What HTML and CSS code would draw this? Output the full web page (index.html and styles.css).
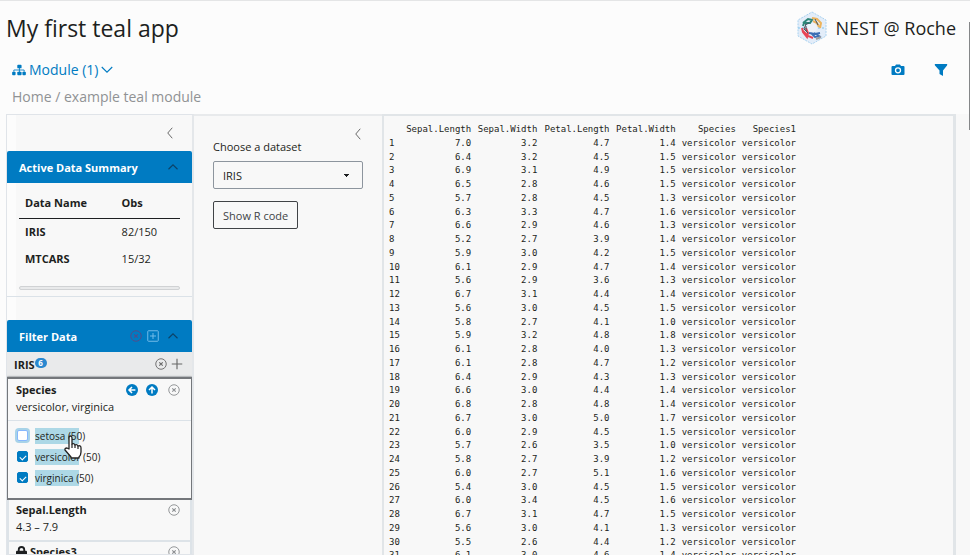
FILE: index.html
```html
<!DOCTYPE html>
<html lang="en">
<head>
<meta charset="utf-8">
<title>My first teal app</title>
<link rel="stylesheet" href="styles.css">
</head>
<body>
<svg class="defs" aria-hidden="true">
  <symbol id="left" viewBox="0 0 16 16"><path d="M11 1 5 8l6 7" fill="none" stroke="currentColor" stroke-width="1.3"/></symbol>
  <symbol id="up" viewBox="0 0 16 16"><path d="m2 11 6-6 6 6" fill="none" stroke="currentColor" stroke-width="1.5"/></symbol>
  <symbol id="down" viewBox="0 0 16 16"><path d="m1 4 7 7 7-7" fill="none" stroke="currentColor" stroke-width="1.5"/></symbol>
  <symbol id="remove" viewBox="0 0 16 16"><g fill="none" stroke="currentColor"><circle cx="8" cy="8" r="7" stroke-width="1.2"/><path d="m5.7 5.7 4.6 4.6m0-4.6-4.6 4.6" stroke-width="1.4"/></g></symbol>
  <symbol id="plus" viewBox="0 0 16 16"><path d="M8 1v14M1 8h14" stroke="currentColor" stroke-width="1.5"/></symbol>
  <symbol id="boxplus" viewBox="0 0 16 16"><g fill="none" stroke="currentColor" stroke-width="1.2"><rect x="1" y="1" width="14" height="14" rx="1"/><path d="M8 4v8M4 8h8"/></g></symbol>
  <symbol id="arrow" viewBox="0 0 16 16"><circle cx="8" cy="8" r="8" fill="#007bc2"/><path d="M12.5 8h-8M8 4 4 8l4 4" fill="none" stroke="#fff" stroke-width="2"/></symbol>
</svg>

<header class="top">
  <h1>My first teal app</h1>
  <div class="brand">
    <svg class="logo" viewBox="0 0 30 34" aria-hidden="true">
      <path d="M15 1 29 9v16l-14 8L1 25V9z" fill="#e3edf9" stroke="#a9d2f0" stroke-dasharray="2 1"/>
      <path d="M1 17h28" stroke="#7fc3ec" stroke-dasharray="2 2"/>
      <circle cx="15" cy="17" r="5" fill="#eef2f8"/>
      <g fill="none" stroke-width="2">
        <path d="m6 12 5-4 4 1-2 3H7l-1 3" stroke="#2e8577"/>
        <path d="m15 7 5 1 4 4-1 5m-7-7 4 2 2 4" stroke="#edb45c"/>
        <path d="m5 17 1 4 4 5 1-4-2-5m-3 3 5 5 5 2" stroke="#e84556"/>
        <path d="m12 22 6 1 5-1m-9 0 4 4 4-1-5-3" stroke="#3c6eb4"/>
        <path d="m8 14 4-2m-3 1-2 5 4 4m-2-7v5m9-12 3 6" stroke="#46545f" stroke-width="1"/>
        <path d="m19 28 5-2" stroke="#9a9da1" stroke-width="2"/>
      </g>
    </svg>
    <span>NEST @ Roche</span>
  </div>
</header>

<nav class="nav">
  <button class="module">
    <svg class="tree" viewBox="0 0 16 14" aria-hidden="true"><g fill="currentColor"><rect x="6" y="1" width="5" height="4" rx="1"/><rect x="0" y="9" width="4" height="4" rx="1"/><rect x="6" y="9" width="5" height="4" rx="1"/><rect x="12" y="9" width="4" height="4" rx="1"/></g><path d="M2 9V7h12v2M8.500 4v6" fill="none" stroke="currentColor"/></svg>
    Module (1)
    <svg class="i12" aria-hidden="true"><use href="#down"/></svg>
  </button>
  <div class="tools">
    <button aria-label="Take a snapshot"><svg class="i14" viewBox="0 0 14 14" aria-hidden="true"><path d="M4 3 5 1.500h4L10 3h2.500q1 0 1 1v7q0 1-1 1h-11q-1 0-1-1V4q0-1 1-1z" fill="currentColor"/><circle cx="7" cy="7.300" r="2.500" fill="none" stroke="#fff" stroke-width="1.300"/></svg></button>
    <button aria-label="Toggle filters"><svg class="i14" viewBox="0 0 14 14" aria-hidden="true"><path d="M1 1h12q.6.500 0 1.500L9 7.500V13L5.500 11V7.500L1 2.500Q.4 1.500 1 1z" fill="currentColor"/></svg></button>
  </div>
</nav>
<div class="crumb">Home / example teal module</div>

<main class="app">
  <aside class="side">
    <button class="fold" aria-label="Collapse filter panel"><svg class="i12" aria-hidden="true"><use href="#left"/></svg></button>

    <section class="summary">
      <div class="bar"><h2>Active Data Summary</h2><button aria-label="Collapse summary"><svg class="i12" aria-hidden="true"><use href="#up"/></svg></button></div>
      <table class="obs">
        <thead><tr><th>Data Name</th><th>Obs</th></tr></thead>
        <tbody><tr><th>IRIS</th><td>82/150</td></tr><tr><th>MTCARS</th><td>15/32</td></tr></tbody>
      </table>
      <div class="hscroll"></div>
    </section>

    <section class="filters">
      <div class="bar"><h2>Filter Data</h2>
        <div class="acts">
          <button class="clear" aria-label="Remove all filters"><svg class="i12" aria-hidden="true"><use href="#remove"/></svg></button>
          <button class="add" aria-label="Add filter"><svg class="i12" aria-hidden="true"><use href="#boxplus"/></svg></button>
          <button aria-label="Collapse filters"><svg class="i12" aria-hidden="true"><use href="#up"/></svg></button>
        </div>
      </div>
      <div class="dataset">
        <b>IRIS</b><span class="count">6</span>
        <button aria-label="Remove IRIS filters"><svg class="i12" aria-hidden="true"><use href="#remove"/></svg></button>
        <button aria-label="Add IRIS filter"><svg class="i12" aria-hidden="true"><use href="#plus"/></svg></button>
      </div>
      <article class="card active">
        <div class="head">
          <div class="title"><h3>Species</h3>
            <button aria-label="Back"><svg class="i12" aria-hidden="true"><use href="#arrow"/></svg></button>
            <button class="turn" aria-label="Reset"><svg class="i12" aria-hidden="true"><use href="#arrow"/></svg></button>
            <button class="grey" aria-label="Remove Species"><svg class="i12" aria-hidden="true"><use href="#remove"/></svg></button>
          </div>
          <p>versicolor, virginica</p>
        </div>
        <div class="choices">
          <label><input type="checkbox" class="focus"><span>setosa (50)</span></label>
          <label><input type="checkbox" checked><span>versicolor (50)</span></label>
          <label><input type="checkbox" checked><span>virginica (50)</span></label>
          <svg class="hand" viewBox="0 0 18 24" aria-hidden="true"><path d="M5 14V3q0-2 1.500-2T8 3v6q2-1 3 1 2-1 3 1 3-1 3 2v4q0 3-2 5v1H7v-1L1 15q-.5-2 2-2z" fill="#fff" stroke="#222" stroke-width="1.300" stroke-linejoin="round"/><path d="M8 9v4m3-3v3m3-2v3" stroke="#222" stroke-width="1.200"/></svg>
        </div>
      </article>
      <article class="card">
        <div class="head">
          <div class="title"><h3>Sepal.Length</h3><button class="grey" aria-label="Remove Sepal.Length"><svg class="i12" aria-hidden="true"><use href="#remove"/></svg></button></div>
          <p>4.3 – 7.9</p>
        </div>
      </article>
      <article class="card">
        <div class="head">
          <div class="title"><svg class="lock" viewBox="0 0 12 13" aria-hidden="true"><rect x="0" y="5" width="12" height="8" rx="1" fill="#1d1f21"/><path d="M3 6V4q0-3 3-3t3 3v2" fill="none" stroke="#1d1f21" stroke-width="2"/></svg><h3>Species3</h3><button class="grey" aria-label="Remove Species3"><svg class="i12" aria-hidden="true"><use href="#remove"/></svg></button></div>
        </div>
      </article>
    </section>
  </aside>

  <section class="encoding">
    <button class="fold" aria-label="Collapse encoding panel"><svg class="i12" aria-hidden="true"><use href="#left"/></svg></button>
    <label for="ds">Choose a dataset</label>
    <select id="ds"><option>IRIS</option><option>MTCARS</option></select>
    <button class="code">Show R code</button>
  </section>

  <section class="output">
    <table class="data">
      <colgroup><col class="c-n"><col class="c-l"><col class="c-w"><col class="c-p"><col class="c-w"><col class="c-s"><col class="c-s"></colgroup>
      <thead><tr><th></th><th>Sepal.Length</th><th>Sepal.Width</th><th>Petal.Length</th><th>Petal.Width</th><th>Species</th><th>Species1</th></tr></thead>
      <tbody id="rows"></tbody>
    </table>
  </section>
</main>
<div class="vscroll"></div>
<script src="script.js"></script>
</body>
</html>
```
FILE: styles.css
```css
* { box-sizing: border-box; }
body {
  margin: 0;
  height: 100vh;
  overflow: hidden;
  display: flex;
  flex-direction: column;
  border-top: 1px solid #e4e5e6;
  background: #fcfcfc;
  color: #1d1f21;
  font: 11px/17px "Open Sans", "Noto Sans", sans-serif;
}
h1, h2, h3, p { margin: 0; font-size: inherit; }
button { border: 0; padding: 0; background: none; color: inherit; font: inherit; display: flex; align-items: center; }
svg { display: block; flex: none; }
.defs { position: absolute; width: 0; height: 0; }
.i12 { width: 12px; height: 12px; }
.i14 { width: 14px; height: 14px; }

.top { display: flex; justify-content: space-between; align-items: center; height: 54px; padding: 0 14px 0 6px; }
h1 { font-size: 23px; line-height: 32px; font-weight: 400; }
.brand { display: flex; align-items: center; gap: 8px; font-size: 18px; line-height: 26px; }
.logo { width: 30px; height: 34px; }

.nav { display: flex; justify-content: space-between; align-items: center; height: 29px; padding: 0 22px 0 12px; color: #007bc2; }
.module { gap: 3px; font-size: 14px; line-height: 20px; }
.tree { width: 14px; height: 12px; }
.tools { display: flex; gap: 29px; }
.crumb { padding: 3px 12px 7px; font-size: 14px; line-height: 20px; color: #909294; }

.app { flex: 1; min-height: 0; display: grid; grid-template-columns: 188px 188px 1fr; padding: 0 14px 0 6px; background: linear-gradient(90deg, #fcfcfc 16px, #f8f8f8 16px); overflow: hidden; }
.side { border: 1px solid #e0e4e9; border-right: 2px solid #e4e7ea; overflow: hidden; }
.side > .fold { margin: 12px 16px 12px auto; }
.fold { color: #666; }

.bar { display: flex; align-items: center; justify-content: space-between; height: 32px; padding: 0 13px 0 12px; background: #007bc2; color: #fff; border-radius: 2px 2px 0 0; }
.bar h2 { font-weight: 700; }
.bar button { color: #0c4267; }
.acts { display: flex; gap: 5px; }
.acts .clear { color: #594a87; }
.acts .add { color: #7ec2ec; }
.acts button:last-child { margin-left: 3px; }

.summary { border-bottom: 1px solid #dbe2e8; padding-bottom: 6px; }
.obs { width: calc(100% - 24px); margin: 5px 12px 0; border-collapse: collapse; text-align: left; }
.obs th, .obs td { height: 27px; padding: 0 6px; }
.obs th:first-child { width: 60%; }
.obs thead th { height: 30px; border-bottom: 1px solid #1d1f21; }
.hscroll { height: 4px; margin: 14px 12px 0; border: 1px solid #d0d2d4; border-radius: 2px; background: #e9eaeb; }

.filters { margin-top: 23px; }
.dataset { display: flex; align-items: center; height: 25px; padding: 0 9px 0 7px; background: #e9eaeb; border-bottom: 1px solid #d4d7da; }
.count { width: 12px; height: 10px; border-radius: 5px; background: #2a88cf; color: #fff; font-size: 8px; line-height: 10px; font-weight: 700; text-align: center; }
.dataset b + .count { margin: 0 auto 2px 0; }
.dataset button { margin-left: 4px; color: #666; }

.card { border: 1px solid #dde3e8; border-width: 0 2px 2px; background: #f8f8f8; }
.active { border: 1px solid #74777b; border-width: 2px 1px; box-shadow: 0 0 2px #777a7d; }
.head { padding: 1px 10px 5px 7px; }
.active .head { padding: 2px 11px 5px 8px; border-bottom: 1px solid #dbe2e8; }
.title { display: flex; align-items: center; gap: 8px; }
.title h3 { margin-right: auto; }
.turn svg { transform: rotate(90deg); }
.grey { color: #8a8d90; }
.turn + .grey { margin-left: 2px; }
.title .lock { width: 11px; height: 12px; }
.title .lock + h3 { margin-left: -5px; }

.choices { position: relative; padding: 4px 9px 10px; font-size: 10px; }
.choices label { display: flex; align-items: center; gap: 7px; height: 21px; }
.choices span { line-height: 16px; background: linear-gradient(#add8e6, #add8e6) 0 0 / 44px 100% no-repeat; }
.choices input { appearance: none; flex: none; width: 11px; height: 11px; margin: 0; border: 1px solid #86b7fe; border-radius: 2px; background: #fff; display: grid; place-items: center; }
.choices .focus { box-shadow: 0 0 0 2px #a8d3e8; }
.choices input:checked { border-color: #007bc2; background: #007bc2; }
.choices input:checked::before { content: ""; width: 5px; height: 3px; border: solid #fff; border-width: 0 0 1px 1px; transform: rotate(-45deg); }
.hand { position: absolute; left: 56px; top: 14px; width: 18px; height: 24px; }

.encoding { padding: 0 19px; border-top: 2px solid #e8eaec; display: flex; flex-direction: column; align-items: flex-start; }
.encoding .fold { align-self: flex-end; margin: 12px -1px 0 0; }
.encoding label { margin-top: -2px; }
.encoding select { appearance: none; width: 100%; height: 28px; margin: 6px 0 12px; padding: 0 9px; border: 1px solid #8d959e; border-radius: 2px; color: inherit; font: inherit;
  background: linear-gradient(45deg, transparent 50%, #1d1f21 50%) right 16px center / 3px 3px no-repeat, linear-gradient(135deg, #1d1f21 50%, transparent 50%) right 13px center / 3px 3px no-repeat, #f8f8f8; }
.code { height: 28px; padding: 0 9px; border: 1px solid #404346; border-radius: 2px; color: #404346; }

.output { border: solid #e1e5e8; border-width: 2px 3px 0 2px; padding: 6px 5px; overflow: hidden; background: #f8f8f8; }
.data { table-layout: fixed; width: 407px; border-collapse: collapse; font: 9px/14px "DejaVu Sans Mono", monospace; text-align: right; white-space: nowrap; }
.data th, .data td { padding: 0; font-weight: 400; }
.data tbody th { text-align: left; }
.data tbody tr:nth-child(4n + 3) { line-height: 13px; }
.c-n { width: 16px; }
.c-l { width: 66px; }
.c-w { width: 66px; }
.c-p { width: 72px; }
.c-s { width: 60px; }
.vscroll { position: fixed; right: 0; top: 22px; width: 1px; height: 108px; background: #858789; }
```
FILE: script.js
```js
// Measurements: sepal length, sepal width, petal length, petal width
const data = `7.0 3.2 4.7 1.4
6.4 3.2 4.5 1.5
6.9 3.1 4.9 1.5
6.5 2.8 4.6 1.5
5.7 2.8 4.5 1.3
6.3 3.3 4.7 1.6
6.6 2.9 4.6 1.3
5.2 2.7 3.9 1.4
5.9 3.0 4.2 1.5
6.1 2.9 4.7 1.4
5.6 2.9 3.6 1.3
6.7 3.1 4.4 1.4
5.6 3.0 4.5 1.5
5.8 2.7 4.1 1.0
5.9 3.2 4.8 1.8
6.1 2.8 4.0 1.3
6.1 2.8 4.7 1.2
6.4 2.9 4.3 1.3
6.6 3.0 4.4 1.4
6.8 2.8 4.8 1.4
6.7 3.0 5.0 1.7
6.0 2.9 4.5 1.5
5.7 2.6 3.5 1.0
5.8 2.7 3.9 1.2
6.0 2.7 5.1 1.6
5.4 3.0 4.5 1.5
6.0 3.4 4.5 1.6
6.7 3.1 4.7 1.5
5.6 3.0 4.1 1.3
5.5 2.6 4.4 1.2
6.1 3.0 4.6 1.4`.split("\n");

document.getElementById("rows").innerHTML = data.map((line, i) => {
  const cells = [...line.split(" "), "versicolor", "versicolor"];
  return `<tr><th>${i + 1}</th>${cells.map(c => `<td>${c}</td>`).join("")}</tr>`;
}).join("");
```
